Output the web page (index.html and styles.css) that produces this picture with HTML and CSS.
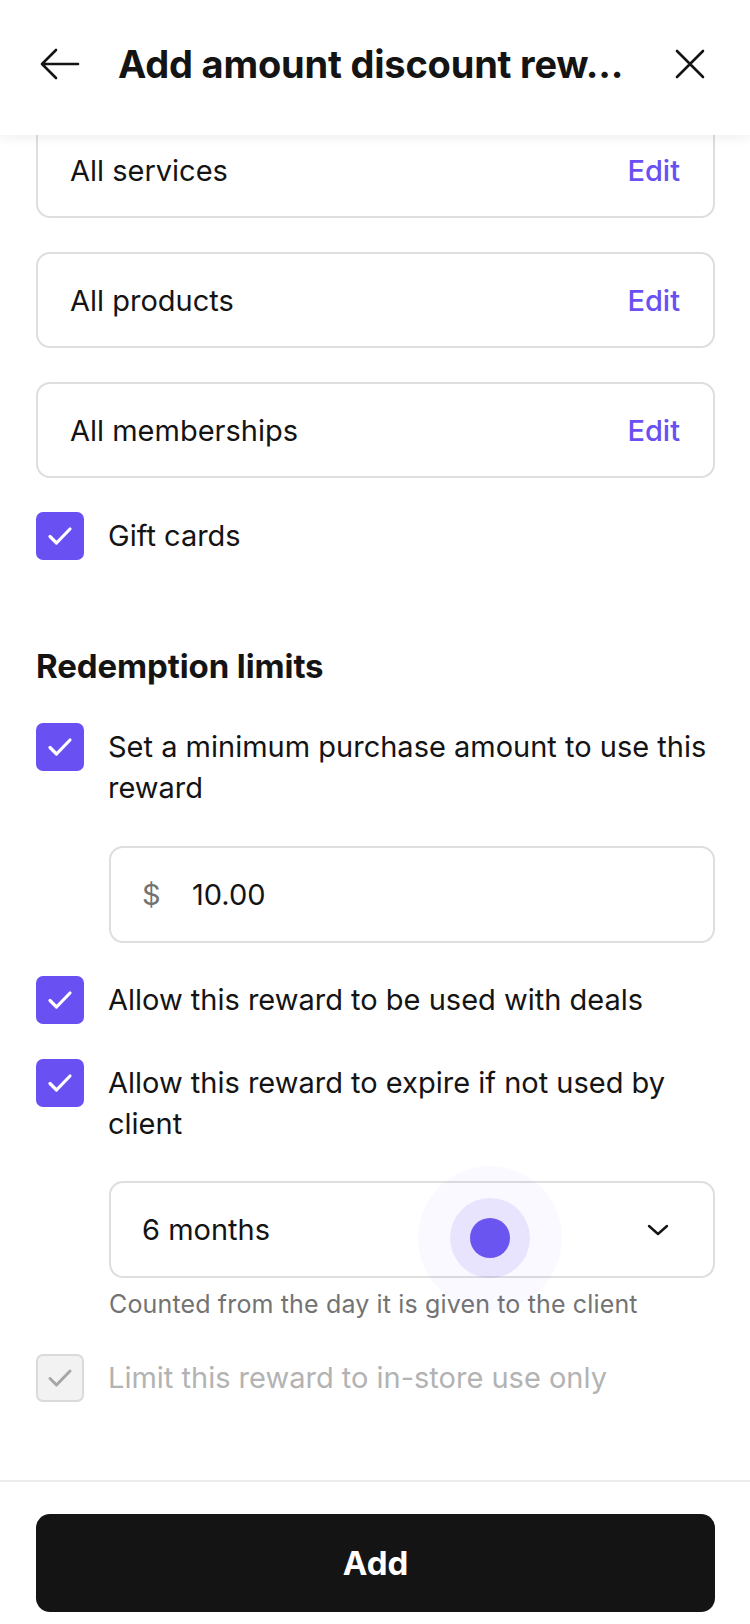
FILE: index.html
```html
<!DOCTYPE html>
<html>

<head>
  <meta charset="utf-8">
  <meta name="viewport" content="width=device-width">
  <title>Add amount discount reward</title>

  <link rel="stylesheet" href="styles.css">
</head>

<body>
  <div class="screen">
    <header class="top-bar">
      <button class="icon-btn" aria-label="Back">
        <svg width="40" height="32" viewBox="0 0 40 32" fill="none" stroke="#141414" stroke-width="2.6" stroke-linecap="round" stroke-linejoin="round">
          <path d="M38 16H3M16 2L2 16l14 14" />
        </svg>
      </button>
      <h1 class="title">Add amount discount rew...</h1>
      <button class="icon-btn close" aria-label="Close">
        <svg width="32" height="32" viewBox="0 0 32 32" fill="none" stroke="#141414" stroke-width="2.6" stroke-linecap="round">
          <path d="M3 3l26 26M29 3L3 29" />
        </svg>
      </button>
    </header>

    <main class="content">
      <div class="option-card first">
        <span>All services</span>
        <a class="edit">Edit</a>
      </div>
      <div class="option-card">
        <span>All products</span>
        <a class="edit">Edit</a>
      </div>
      <div class="option-card">
        <span>All memberships</span>
        <a class="edit">Edit</a>
      </div>

      <label class="check-row">
        <span class="box"><svg width="26" height="20" viewBox="0 0 26 20" fill="none" stroke="#fff" stroke-width="3.2" stroke-linecap="round" stroke-linejoin="round"><path d="M3 10.5l6.5 6.5L23 3" /></svg></span>
        <span class="check-label">Gift cards</span>
      </label>

      <h2 class="section-title">Redemption limits</h2>

      <label class="check-row">
        <span class="box"><svg width="26" height="20" viewBox="0 0 26 20" fill="none" stroke="#fff" stroke-width="3.2" stroke-linecap="round" stroke-linejoin="round"><path d="M3 10.5l6.5 6.5L23 3" /></svg></span>
        <span class="check-label">Set a minimum purchase amount to use this reward</span>
      </label>

      <div class="field money">
        <span class="prefix">$</span>
        <span class="value">10.00</span>
      </div>

      <label class="check-row">
        <span class="box"><svg width="26" height="20" viewBox="0 0 26 20" fill="none" stroke="#fff" stroke-width="3.2" stroke-linecap="round" stroke-linejoin="round"><path d="M3 10.5l6.5 6.5L23 3" /></svg></span>
        <span class="check-label">Allow this reward to be used with deals</span>
      </label>

      <label class="check-row">
        <span class="box"><svg width="26" height="20" viewBox="0 0 26 20" fill="none" stroke="#fff" stroke-width="3.2" stroke-linecap="round" stroke-linejoin="round"><path d="M3 10.5l6.5 6.5L23 3" /></svg></span>
        <span class="check-label">Allow this reward to expire if not used by client</span>
      </label>

      <div class="field select">
        <span class="value">6 months</span>
        <svg width="22" height="12" viewBox="0 0 22 12" fill="none" stroke="#141414" stroke-width="2.4" stroke-linecap="round" stroke-linejoin="round">
          <path d="M2 2l9 8 9-8" />
        </svg>
        <span class="touch"><span class="touch-ring"><span class="touch-dot"></span></span></span>
      </div>
      <p class="hint">Counted from the day it is given to the client</p>

      <label class="check-row disabled">
        <span class="box"><svg width="26" height="20" viewBox="0 0 26 20" fill="none" stroke="#a6a6a6" stroke-width="3" stroke-linecap="round" stroke-linejoin="round"><path d="M3 10.5l6.5 6.5L23 3" /></svg></span>
        <span class="check-label">Limit this reward to in-store use only</span>
      </label>
    </main>

    <footer class="actions">
      <button class="primary">Add</button>
    </footer>
  </div>
</body>

</html>
```

FILE: styles.css
```css
html,
body {
  margin: 0;
  padding: 0;
  width: 100%;
  height: 100%;
  overflow: hidden;
  background: #fff;
}

body {
  font-family: Inter, "Noto Sans", sans-serif;
  color: #141414;
}

.screen {
  display: flex;
  flex-direction: column;
  height: 1624px;
}

.top-bar {
  position: relative;
  z-index: 2;
  flex: none;
  height: 135px;
  display: flex;
  align-items: center;
  padding: 0 44px 8px 40px;
  box-sizing: border-box;
  background: #fff;
  box-shadow: 0 4px 10px rgba(0, 0, 0, 0.06);
}

.icon-btn {
  border: 0;
  background: none;
  padding: 0;
  display: flex;
  cursor: pointer;
}

.close {
  margin-left: auto;
}

.title {
  margin: 0 0 0 38px;
  font-size: 38px;
  font-weight: 700;
  letter-spacing: -0.2px;
  white-space: nowrap;
}

.content {
  flex: 1;
  overflow: hidden;
  padding: 0 35px 0 36px;
  font-size: 29px;
}

.option-card {
  height: 96px;
  box-sizing: border-box;
  border: 2px solid #dedede;
  border-radius: 14px;
  display: flex;
  align-items: center;
  justify-content: space-between;
  padding: 0 33px 0 32px;
  margin-bottom: 34px;
}

.option-card.first {
  margin-top: -13px;
}

.edit {
  color: #6950f3;
  font-weight: 500;
  cursor: pointer;
}

.check-row {
  display: flex;
  align-items: flex-start;
  margin-bottom: 35px;
  cursor: pointer;
}

.box {
  flex: none;
  width: 48px;
  height: 48px;
  box-sizing: border-box;
  border-radius: 7px;
  background: #6950f3;
  display: flex;
  align-items: center;
  justify-content: center;
}

.check-label {
  margin-left: 24px;
  padding-top: 3px;
  line-height: 41px;
}

.disabled .box {
  background: #f2f2f2;
  border: 2px solid #dadada;
}

.disabled .check-label {
  color: #b3b3b3;
}

.section-title {
  margin: 86px 0 37px;
  font-size: 33px;
  line-height: 40px;
  font-weight: 700;
  letter-spacing: -0.1px;
}

.field {
  position: relative;
  height: 97px;
  margin: 38px 0 33px 73px;
  box-sizing: border-box;
  border: 2px solid #dedede;
  border-radius: 14px;
  display: flex;
  align-items: center;
  padding: 0 30px 0 31px;
}

.prefix {
  color: #737373;
  width: 50px;
}

.select {
  margin: 37px 0 0 73px;
  justify-content: space-between;
  padding-right: 44px;
}

.touch {
  position: absolute;
  left: 307px;
  top: -17px;
  width: 144px;
  height: 144px;
  border-radius: 50%;
  background: rgba(105, 80, 243, 0.035);
  display: flex;
  align-items: center;
  justify-content: center;
}

.touch-ring {
  width: 80px;
  height: 80px;
  border-radius: 50%;
  background: rgba(105, 80, 243, 0.12);
  display: flex;
  align-items: center;
  justify-content: center;
}

.touch-dot {
  width: 40px;
  height: 40px;
  border-radius: 50%;
  background: #6a55f1;
}

.hint {
  margin: 11px 0 35px 73px;
  font-size: 25px;
  line-height: 30px;
  color: #737373;
  letter-spacing: 0.15px;
}

.actions {
  flex: none;
  border-top: 2px solid #ececec;
  padding: 32px 35px 12px 36px;
}

.primary {
  width: 100%;
  height: 98px;
  border: 0;
  border-radius: 14px;
  background: #141414;
  color: #fff;
  font-family: Inter, "Noto Sans", sans-serif;
  font-size: 33px;
  font-weight: 700;
  cursor: pointer;
}
```
